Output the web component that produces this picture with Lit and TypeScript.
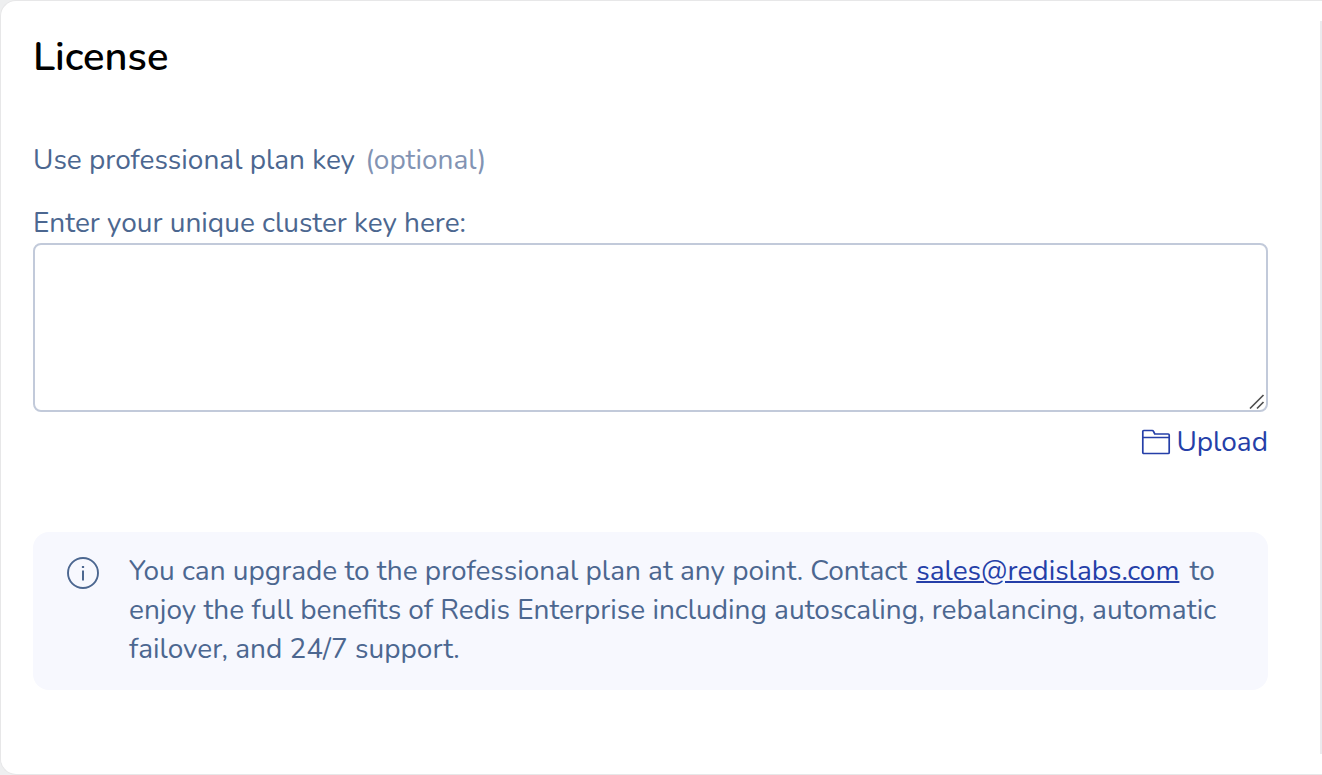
import { LitElement, html, css } from "lit";
import { customElement } from "lit/decorators.js";

@customElement("app-root")
export class AppRoot extends LitElement {
  static styles = css`
    :host {
      display: block;
      min-height: 100vh;
      background: #eeeff0;
      font-family: "Nunito", "Nunito Sans", "Open Sans", "Noto Sans", sans-serif;
    }
    * { box-sizing: border-box; }
    .card {
      display: flex;
      min-height: 100vh;
      padding: 20px 0;
      background: #fff;
      border: 1px solid #e7e7e8;
      border-right: 0;
      border-radius: 16px 0 0 16px;
      font-size: 28px;
      line-height: 40px;
      color: #4c6790;
    }
    .panel {
      flex: 1;
      min-width: 0;
      padding: 12px 52px 0 32px;
      border-right: 2px solid #ebebee;
    }
    h1 { margin: 0; font-size: 40px; font-weight: 600; line-height: 48px; color: #000; }
    .plan { margin: 59px 0 0; }
    .optional { margin-left: 3px; color: #8293b3; }
    .label { display: block; margin-top: 23px; }
    .field { position: relative; }
    textarea {
      display: block;
      width: 100%;
      height: 169px;
      padding: 12px 16px;
      border: 2px solid #c2cada;
      border-radius: 8px;
      background: #fff;
      color: inherit;
      font: inherit;
      resize: vertical;
    }
    textarea::-webkit-resizer { background: transparent; }
    .grip { position: absolute; right: 2px; bottom: 2px; pointer-events: none; }
    .actions { display: flex; justify-content: flex-end; margin-top: 10px; }
    .upload {
      display: flex;
      align-items: center;
      gap: 5px;
      padding: 0;
      border: 0;
      background: none;
      color: #253fa8;
      font: inherit;
      cursor: pointer;
    }
    .note {
      display: flex;
      gap: 29px;
      margin-top: 70px;
      padding: 20px 40px 21px 33px;
      border-radius: 16px;
      background: #f7f8fe;
      line-height: 39px;
    }
    .info { flex: none; margin-top: 4px; }
    .note p { margin: 0; }
    .note a { margin: 0 3px 0 2px; color: #253fa8; text-decoration-thickness: 2px; }
  `;

  render() {
    return html`<main class="card">
      <section class="panel">
        <h1>License</h1>
        <p class="plan">Use professional plan key <span class="optional">(optional)</span></p>
        <label class="label" for="key">Enter your unique cluster key here:</label>
        <div class="field">
          <textarea id="key"></textarea>
          <svg class="grip" width="18" height="16" viewBox="0 0 18 16" fill="none" stroke="#505050" stroke-width="1.7" aria-hidden="true">
            <path d="M2 14.5 15.5 1M9 14.5l6.500-6.500" />
          </svg>
        </div>
        <div class="actions">
          <button class="upload" type="button">
            <svg width="30" height="26" viewBox="0 0 30 26" fill="none" stroke="currentColor" stroke-width="1.7" stroke-linejoin="round" aria-hidden="true">
              <path d="M2.800 1.500H11.200Q12.200 1.500 12.500 2.400L13.800 5H27.200Q28.200 5 28.200 6V23.500Q28.200 24.500 27.200 24.500H2.800Q1.800 24.500 1.800 23.500V2.500Q1.800 1.500 2.800 1.500ZM1.800 8.500H28.200" />
            </svg>
            Upload
          </button>
        </div>
        <aside class="note">
          <svg class="info" width="34" height="34" viewBox="0 0 34 34" fill="none" stroke="currentColor" aria-hidden="true">
            <circle cx="17" cy="17" r="15" stroke-width="1.900" />
            <path d="M17 14.500V24.500" stroke-width="2" />
            <path d="M17 10V12" stroke-width="2.200" />
          </svg>
          <p>You can upgrade to the professional plan at any point. Contact <a href="mailto:sales@redislabs.com">sales@redislabs.com</a> to enjoy the full benefits of Redis Enterprise including autoscaling, rebalancing, automatic failover, and 24/7 support.</p>
        </aside>
      </section>
    </main>`;
  }
}
